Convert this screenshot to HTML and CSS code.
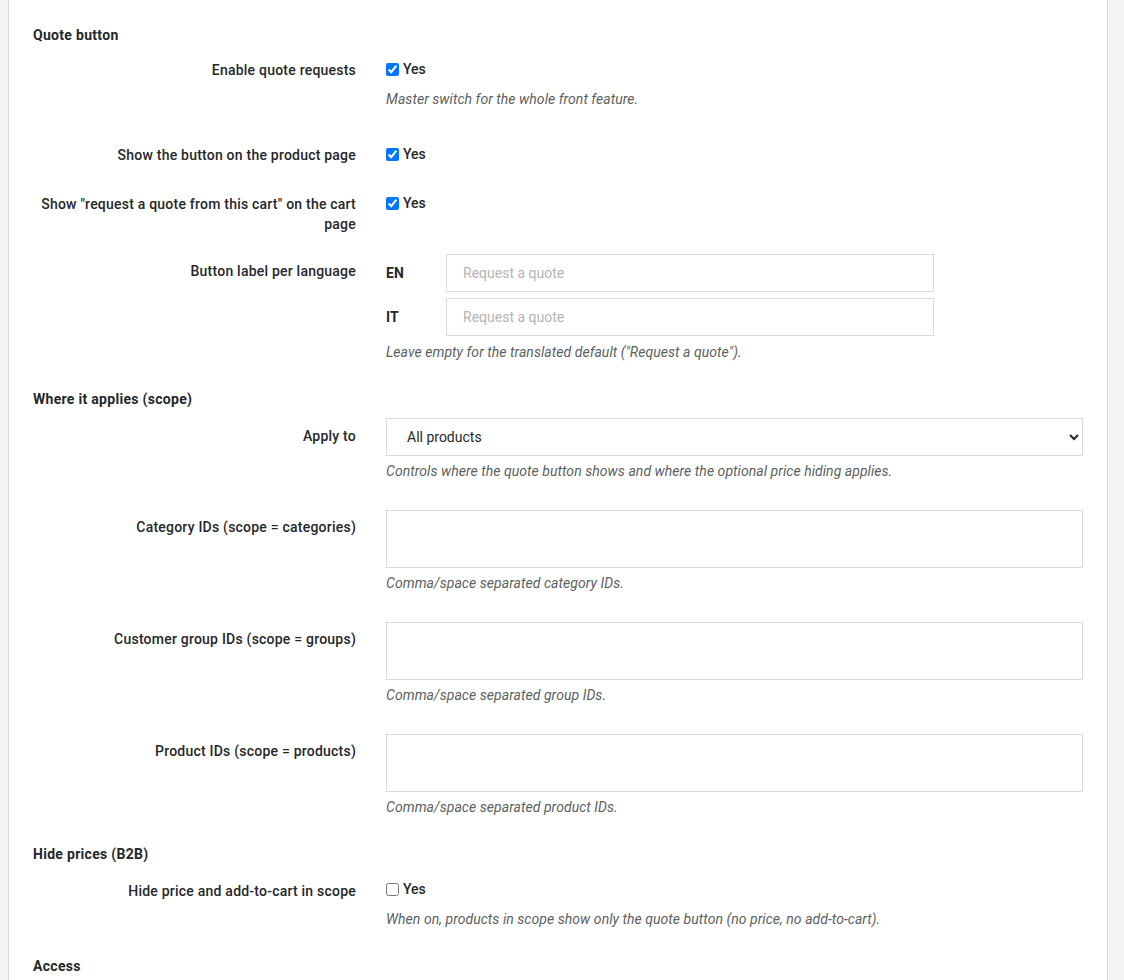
FILE: index.html
```html
<!DOCTYPE html>
<html lang="en">
<head>
<meta charset="utf-8">
<title>Quote settings</title>
<link rel="stylesheet" href="styles.css">
</head>
<body>
<div class="panel">
  <h3 class="section section-first">Quote button</h3>

  <div class="row">
    <label class="lbl">Enable quote requests</label>
    <div class="ctl">
      <label class="check"><input type="checkbox" checked> Yes</label>
      <p class="help">Master switch for the whole front feature.</p>
    </div>
  </div>

  <div class="row">
    <label class="lbl">Show the button on the product page</label>
    <div class="ctl">
      <label class="check"><input type="checkbox" checked> Yes</label>
    </div>
  </div>

  <div class="row">
    <label class="lbl">Show "request a quote from this cart" on the cart page</label>
    <div class="ctl">
      <label class="check"><input type="checkbox" checked> Yes</label>
    </div>
  </div>

  <div class="row">
    <label class="lbl">Button label per language</label>
    <div class="ctl">
      <div class="lang-list">
        <div class="lang"><span class="iso">EN</span><input class="text" type="text" placeholder="Request a quote"></div>
        <div class="lang"><span class="iso">IT</span><input class="text" type="text" placeholder="Request a quote"></div>
      </div>
      <p class="help">Leave empty for the translated default ("Request a quote").</p>
    </div>
  </div>

  <h3 class="section">Where it applies (scope)</h3>

  <div class="row">
    <label class="lbl lbl-select">Apply to</label>
    <div class="ctl">
      <select class="select">
        <option>All products</option>
        <option>Categories</option>
        <option>Customer groups</option>
        <option>Products</option>
      </select>
      <p class="help">Controls where the quote button shows and where the optional price hiding applies.</p>
    </div>
  </div>

  <div class="row">
    <label class="lbl">Category IDs (scope = categories)</label>
    <div class="ctl">
      <textarea class="area"></textarea>
      <p class="help">Comma/space separated category IDs.</p>
    </div>
  </div>

  <div class="row">
    <label class="lbl">Customer group IDs (scope = groups)</label>
    <div class="ctl">
      <textarea class="area"></textarea>
      <p class="help">Comma/space separated group IDs.</p>
    </div>
  </div>

  <div class="row">
    <label class="lbl">Product IDs (scope = products)</label>
    <div class="ctl">
      <textarea class="area"></textarea>
      <p class="help">Comma/space separated product IDs.</p>
    </div>
  </div>

  <h3 class="section">Hide prices (B2B)</h3>

  <div class="row">
    <label class="lbl lbl-check">Hide price and add-to-cart in scope</label>
    <div class="ctl">
      <label class="check"><input type="checkbox"> Yes</label>
      <p class="help">When on, products in scope show only the quote button (no price, no add-to-cart).</p>
    </div>
  </div>

  <h3 class="section">Access</h3>
</div>
</body>
</html>
```

FILE: styles.css
```css
html, body {
  margin: 0;
  padding: 0;
  background: #f4f4f4;
  height: 100%;
  overflow: hidden;
}

body {
  font-family: Roboto, "Liberation Sans", sans-serif;
  font-size: 14px;
  line-height: 20px;
  color: #363a41;
}

.panel {
  margin: 0 16px 0 8px;
  background: #fff;
  border-left: 1px solid #dcdcdc;
  border-right: 1px solid #dcdcdc;
  padding: 27px 24px 40px 24px;
  min-height: 100%;
  box-sizing: border-box;
}

.section {
  margin: -2px 0 9px;
  font-size: 14px;
  line-height: 20px;
  font-weight: 700;
  letter-spacing: 0.3px;
  color: #25282b;
}

.section-first {
  margin-bottom: 8px;
}

.row {
  display: grid;
  grid-template-columns: 323px 1fr;
  column-gap: 30px;
  margin-bottom: 15px;
}

.lbl {
  text-align: right;
  font-weight: 500;
  letter-spacing: 0.22px;
  padding-top: 7px;
  padding-bottom: 5px;
  color: #25282b;
}

.lbl-select {
  padding-top: 8px;
}

.lbl-check {
  padding-top: 8px;
}

.ctl {
  min-width: 0;
}

.check {
  display: flex;
  align-items: center;
  gap: 4px;
  padding-top: 6px;
  padding-bottom: 8px;
  font-weight: 500;
  color: #25282b;
}

.check input {
  margin: 0;
  width: 13px;
  height: 13px;
}

.help {
  margin: 5px 0 14px;
  font-style: italic;
  letter-spacing: 0.05px;
  color: #5c5f63;
}

.check + .help {
  margin-top: 2px;
}

.lang-list {
  display: flex;
  flex-direction: column;
  gap: 6px;
}

.lang-list + .help {
  margin-top: 6px;
}

.lang {
  display: flex;
  align-items: center;
}

.iso {
  width: 60px;
  flex: none;
  font-weight: 700;
  color: #25282b;
}

.text {
  width: 488px;
  height: 38px;
  box-sizing: border-box;
  border: 1px solid #dcdcdc;
  padding: 0 16px;
  font: inherit;
  color: #363a41;
  background: #fff;
  outline: none;
}

.text::placeholder {
  color: #b5b5b5;
}

.select {
  display: block;
  width: 100%;
  height: 38px;
  box-sizing: border-box;
  border: 1px solid #dcdcdc;
  border-radius: 0;
  padding: 0 12px 0 16px;
  font: inherit;
  color: #25282b;
  background: #fff;
}

.area {
  display: block;
  width: 100%;
  height: 58px;
  box-sizing: border-box;
  border: 1px solid #dcdcdc;
  border-radius: 0;
  padding: 8px 16px;
  font: inherit;
  resize: none;
  background: #fff;
  outline: none;
}
```
